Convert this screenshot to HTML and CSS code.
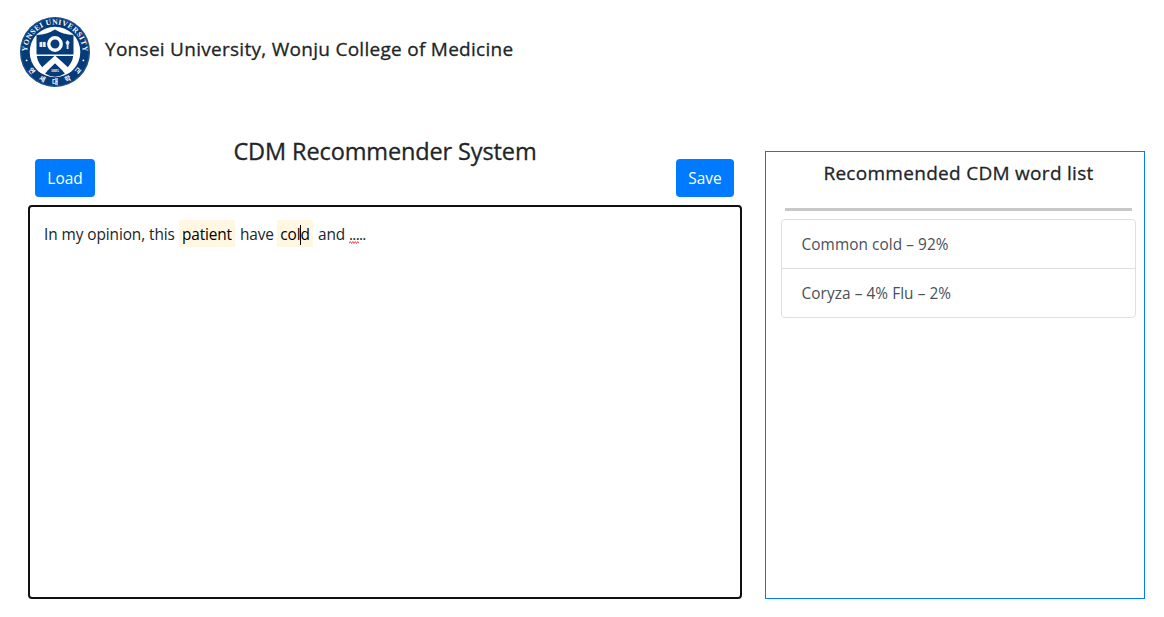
FILE: index.html
```html
<!DOCTYPE html>
<html lang="en">
<head>
<meta charset="utf-8">
<title>CDM Recommender System</title>
<link rel="stylesheet" href="styles.css">
</head>
<body>
<header class="header">
  <svg class="logo" viewBox="0 0 70 70" role="img" aria-label="Yonsei University">
    <defs>
      <path id="arc-top" d="M8.1 42.2A27.8 27.8 0 1 1 61.9 42.2"/>
    </defs>
    <circle cx="35" cy="35" r="35" fill="#063b7a"/>
    <circle cx="35" cy="35" r="34.2" fill="none" stroke="#5f7ea8" stroke-width=".4"/>
    <circle cx="35" cy="35" r="25.3" fill="#fff"/>
    <path d="M16.5 18Q27 17.5 35 12.5Q43 17.5 53.5 18V36Q53.5 50 35 59.5Q16.5 50 16.5 36Z" fill="#063b7a"/>
    <path d="M16 38.3H54" stroke="#fff" stroke-width="1.5"/>
    <path d="M35 38.5L52 54L46 57L35 46.5L24 57L18 54Z" fill="#fff"/>
    <path d="M35 46.5L45 56.5Q35 63 25 56.5Z" fill="#063b7a"/>
    <circle cx="35" cy="27" r="6.2" fill="#063b7a" stroke="#fff" stroke-width="3.4"/>
    <path d="M19.5 25.2Q21.5 24.2 22.5 25.2Q24 24.2 25.7 25.2V30H19.5Z" fill="#fff" opacity=".9"/>
    <path d="M22.6 25V30" stroke="#063b7a" stroke-width=".6"/>
    <path d="M47.5 23L49.6 25.5L48.5 28V32H46.7V28L45.5 25.5Z" fill="#fff" opacity=".9"/>
    <text class="logo-year" x="35" y="54.6">1885</text>
    <text class="logo-name"><textPath href="#arc-top" startOffset="50%" textLength="86" lengthAdjust="spacing">YONSEI UNIVERSITY</textPath></text>
    <g class="logo-korean">
      <text x="35" y="67.2" transform="rotate(51 35 35)">연</text>
      <text x="35" y="67.2" transform="rotate(25.5 35 35)">세</text>
      <text x="35" y="67.2">대</text>
      <text x="35" y="67.2" transform="rotate(-25.5 35 35)">학</text>
      <text x="35" y="67.2" transform="rotate(-51 35 35)">교</text>
    </g>
    <circle cx="6.6" cy="43.4" r=".9" fill="#fff"/>
    <circle cx="63.4" cy="43.4" r=".9" fill="#fff"/>
  </svg>
  <h1 class="org">Yonsei University, Wonju College of Medicine</h1>
</header>
<main class="main">
  <section class="workspace">
    <h2 class="title">CDM Recommender System</h2>
    <div class="toolbar">
      <button class="btn btn-load" type="button">Load</button>
      <button class="btn btn-save" type="button">Save</button>
    </div>
    <div class="editor"><span class="w-intro">In my opinion, this</span><mark class="term w-patient">patient</mark><span class="w-have">have</span><mark class="term w-cold">col<i class="caret"></i>d</mark><span class="w-and">and</span><span class="dots">.....<svg class="squiggle" viewBox="0 0 10 3"><path d="M0 2.5L1.25 .5L2.5 2.5L3.75 .5L5 2.5L6.25 .5L7.5 2.5L8.75 .5L10 2.5"/></svg></span></div>
  </section>
  <aside class="panel">
    <h3 class="panel-title">Recommended CDM word list</h3>
    <hr class="rule">
    <ul class="list">
      <li class="item item-first">Common cold – 92%</li>
      <li class="item item-second">Coryza – 4% Flu – 2%</li>
    </ul>
  </aside>
</main>
</body>
</html>
```
FILE: styles.css
```css
* { box-sizing: border-box; }
body {
  margin: 0;
  height: 617px;
  overflow: hidden;
  background: #fff;
  color: #212529;
  font: 400 16px/24px "Open Sans", "Noto Sans", sans-serif;
}
h1, h2, h3 { margin: 0; font-weight: 500; white-space: nowrap; -webkit-text-stroke: .3px currentColor; }
.header { display: flex; align-items: flex-start; height: 140px; padding: 17px 20px 0; }
.logo { width: 70px; height: 70px; flex: none; }
.logo-name, .logo-korean, .logo-year { fill: #fff; text-anchor: middle; }
.logo-name { font: 700 7.6px "Liberation Serif", serif; }
.logo-korean { font: 700 6.6px "Noto Sans CJK KR", sans-serif; }
.logo-year { font: 700 4px "Liberation Serif", serif; }
.org { margin: 20px 0 0 15px; font-size: 19px; line-height: 24px; letter-spacing: .28px; }
.main { display: flex; padding: 0 19px 0 28px; }
.workspace { width: 714px; }
.title { height: 19px; font-size: 23.5px; line-height: 22px; letter-spacing: -.12px; text-align: center; }
.toolbar { display: flex; justify-content: space-between; padding: 0 8px 8px 7px; }
.btn {
  height: 38px;
  padding: 1px 0 0;
  border: 0;
  border-radius: 4px;
  background: #007bff;
  color: #fff;
  font: inherit;
  font-size: 15.4px;
}
.btn-load { width: 60px; }
.btn-save { width: 58px; }
.editor {
  display: flex;
  align-items: flex-start;
  height: 394px;
  padding: 13px 14px;
  border: 2px solid #101010;
  border-radius: 4px;
  font-size: 15.4px;
  line-height: 30px;
  letter-spacing: -.15px;
  white-space: nowrap;
}
.w-intro { width: 135px; letter-spacing: -.08px; }
.term { height: 27px; background: #fff7e2; color: #000; text-align: center; }
.w-patient { width: 56px; }
.w-have { width: 42px; padding-left: 5px; }
.w-cold { width: 36px; }
.w-and { width: 35px; padding-left: 5px; }
.caret { display: inline-block; width: 1px; height: 20px; margin: 0 -1px 0 0; background: #000; vertical-align: -5px; }
.dots { position: relative; letter-spacing: -.7px; margin-left: 1px; }
.squiggle { position: absolute; left: 0; top: 21px; width: 10px; height: 3px; }
.squiggle path { fill: none; stroke: #f03a3a; stroke-width: .9; }
.panel {
  width: 380px;
  height: 448px;
  margin: 11px 0 0 23px;
  padding: 9px 8px 0 15px;
  border: 1px solid #007bff;
}
.panel-title { font-size: 19px; line-height: 24px; letter-spacing: .29px; text-align: center; }
.rule { height: 3px; margin: 23px 4px 8px; border: 0; background: #c8c8c8; }
.list { margin: 0; padding: 0; list-style: none; border: 1px solid #dfdfdf; border-radius: 4px; }
.item { height: 49px; padding: 13px 20px 0 19.5px; color: #495057; font-size: 15.4px; line-height: 24px; letter-spacing: .06px; }
.item-first { border-bottom: 1px solid #dfdfdf; }
.item-second { height: 48px; }
```
